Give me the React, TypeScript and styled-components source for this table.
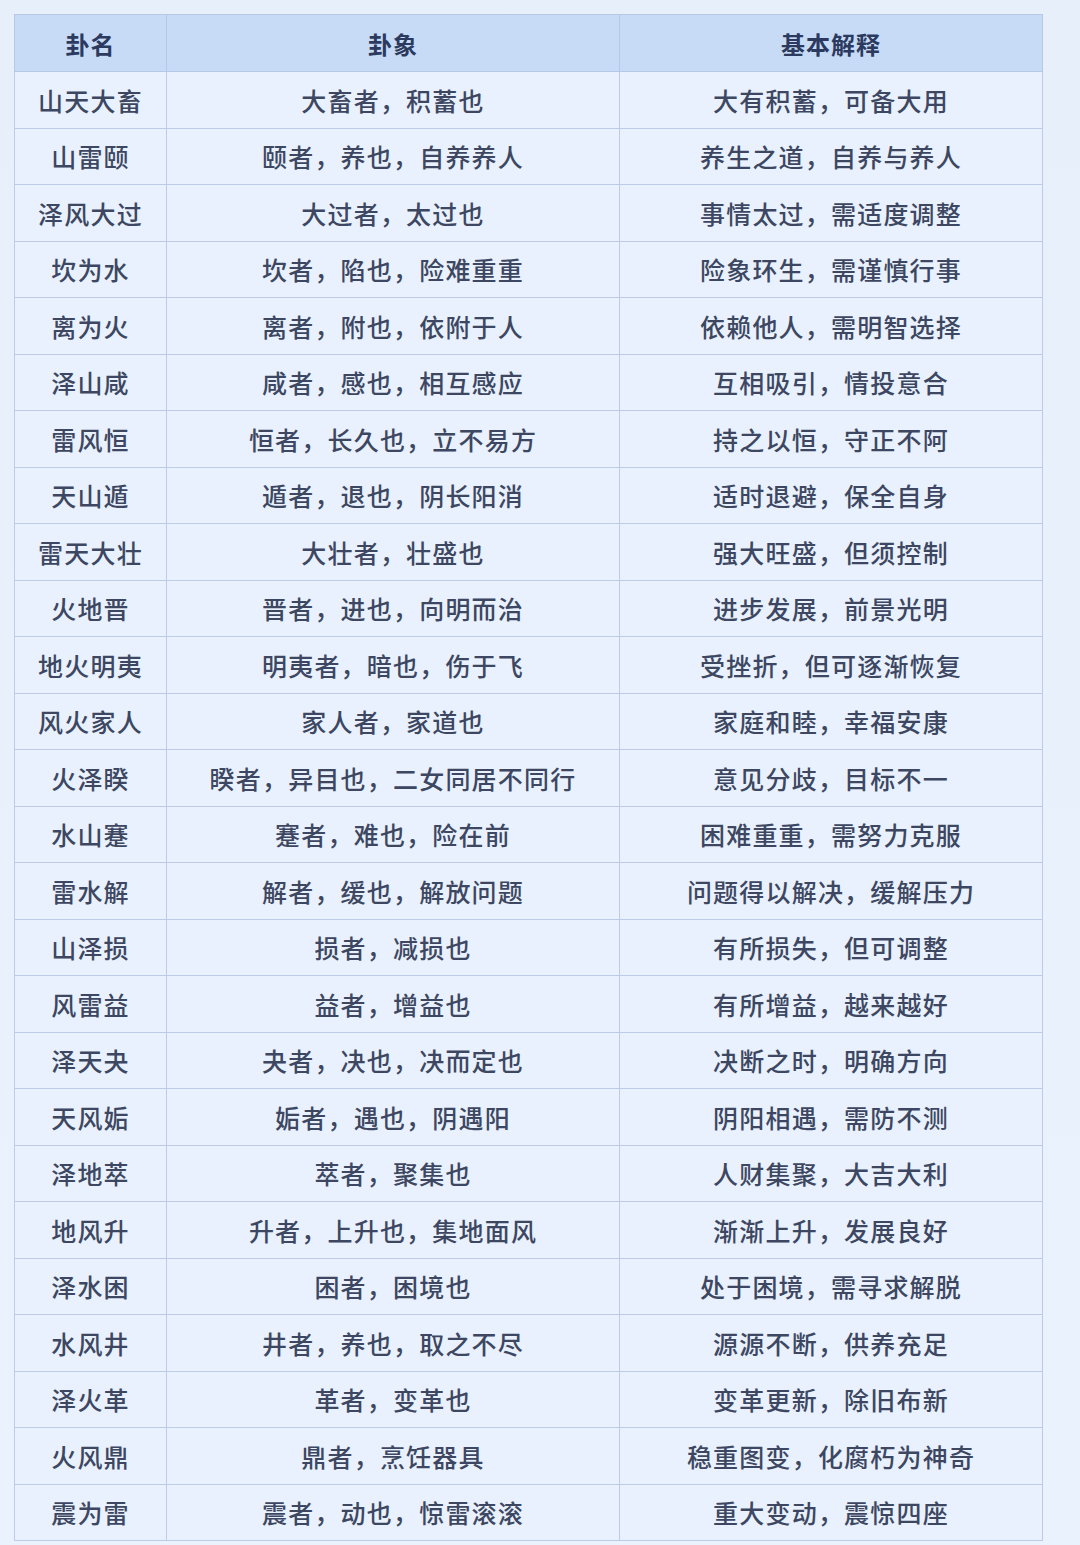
import React from 'react';
import styled, { createGlobalStyle } from 'styled-components';

const GlobalStyle = createGlobalStyle`
  html, body {
    margin: 0;
    padding: 0;
    background: #e9f1fc;
  }
  body {
    font-family: "Noto Sans CJK SC", "Noto Sans", sans-serif;
  }
`;

const Page = styled.div`
  width: 1080px;
  height: 1545px;
  padding: 14px 0 0 14px;
  box-sizing: border-box;
  background: linear-gradient(180deg, #e7effb 0%, #eaf2fd 100%);
`;

const Table = styled.table`
  border-collapse: collapse;
  width: 1028px;
  table-layout: fixed;
  background: #e8f1fd;
  border: 1.5px solid #bccbe6;
`;

const HeadCell = styled.th`
  height: 56px;
  background: #c7dbf6;
  color: #2b3a5e;
  font-size: 24px;
  font-weight: 700;
  text-align: center;
  border: 1.5px solid #b7c8e6;
  padding: 0;
  letter-spacing: 1px;
`;

const Cell = styled.td`
  height: 55.5px;
  color: #3d4761;
  font-size: 25px;
  font-weight: 500;
  text-align: center;
  border: 1.5px solid #bdcbe6;
  padding: 0;
  letter-spacing: 1.2px;
`;

const rows: [string, string, string][] = [
  ['山天大畜', '大畜者，积蓄也', '大有积蓄，可备大用'],
  ['山雷颐', '颐者，养也，自养养人', '养生之道，自养与养人'],
  ['泽风大过', '大过者，太过也', '事情太过，需适度调整'],
  ['坎为水', '坎者，陷也，险难重重', '险象环生，需谨慎行事'],
  ['离为火', '离者，附也，依附于人', '依赖他人，需明智选择'],
  ['泽山咸', '咸者，感也，相互感应', '互相吸引，情投意合'],
  ['雷风恒', '恒者，长久也，立不易方', '持之以恒，守正不阿'],
  ['天山遁', '遁者，退也，阴长阳消', '适时退避，保全自身'],
  ['雷天大壮', '大壮者，壮盛也', '强大旺盛，但须控制'],
  ['火地晋', '晋者，进也，向明而治', '进步发展，前景光明'],
  ['地火明夷', '明夷者，暗也，伤于飞', '受挫折，但可逐渐恢复'],
  ['风火家人', '家人者，家道也', '家庭和睦，幸福安康'],
  ['火泽睽', '睽者，异目也，二女同居不同行', '意见分歧，目标不一'],
  ['水山蹇', '蹇者，难也，险在前', '困难重重，需努力克服'],
  ['雷水解', '解者，缓也，解放问题', '问题得以解决，缓解压力'],
  ['山泽损', '损者，减损也', '有所损失，但可调整'],
  ['风雷益', '益者，增益也', '有所增益，越来越好'],
  ['泽天夬', '夬者，决也，决而定也', '决断之时，明确方向'],
  ['天风姤', '姤者，遇也，阴遇阳', '阴阳相遇，需防不测'],
  ['泽地萃', '萃者，聚集也', '人财集聚，大吉大利'],
  ['地风升', '升者，上升也，集地面风', '渐渐上升，发展良好'],
  ['泽水困', '困者，困境也', '处于困境，需寻求解脱'],
  ['水风井', '井者，养也，取之不尽', '源源不断，供养充足'],
  ['泽火革', '革者，变革也', '变革更新，除旧布新'],
  ['火风鼎', '鼎者，烹饪器具', '稳重图变，化腐朽为神奇'],
  ['震为雷', '震者，动也，惊雷滚滚', '重大变动，震惊四座'],
];

const App: React.FC = () => {
  return (
    <>
      <GlobalStyle />
      <Page>
        <Table>
          <colgroup>
            <col style={{ width: 152 }} />
            <col style={{ width: 453 }} />
            <col style={{ width: 423 }} />
          </colgroup>
          <thead>
            <tr>
              <HeadCell>卦名</HeadCell>
              <HeadCell>卦象</HeadCell>
              <HeadCell>基本解释</HeadCell>
            </tr>
          </thead>
          <tbody>
            {rows.map(([name, image, meaning]) => (
              <tr key={name}>
                <Cell>{name}</Cell>
                <Cell>{image}</Cell>
                <Cell>{meaning}</Cell>
              </tr>
            ))}
          </tbody>
        </Table>
      </Page>
    </>
  );
};

export default App;
